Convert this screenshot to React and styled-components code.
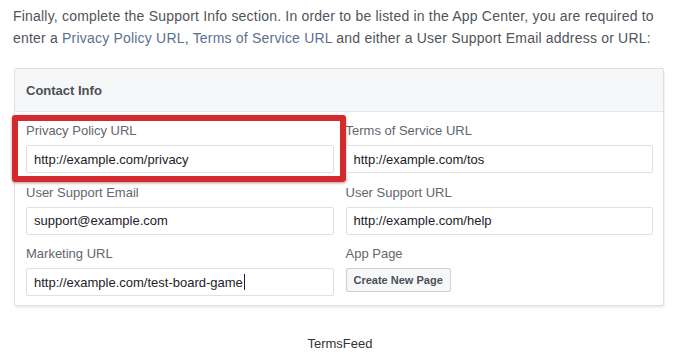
import React from "react";
import styled, { createGlobalStyle } from "styled-components";

const Global = createGlobalStyle`
  html, body { margin: 0; padding: 0; background: #ffffff; }
  body { font-family: "Liberation Sans", Arial, Helvetica, sans-serif; }
  * { box-sizing: border-box; }
`;

const Page = styled.div`
  width: 680px;
  height: 358px;
  padding: 5px 16px 0 13px;
  display: flex;
  flex-direction: column;
`;

const Intro = styled.p`
  margin: 0;
  font-size: 14px;
  line-height: 22px;
  letter-spacing: 0.2px;
  color: #50545b;
`;

const Link = styled.a`
  color: #5b6f8f;
  text-decoration: none;
`;

const Panel = styled.section`
  margin: 19px 0 0 1px;
  border: 1px solid #dddfe2;
  border-radius: 2px;
  box-shadow: 1px 2px 1px rgba(0, 0, 0, 0.06);
  background: #fff;
`;

const PanelHeader = styled.header`
  height: 43px;
  padding: 0 11px;
  display: flex;
  align-items: center;
  background: #f6f7f9;
  border-bottom: 1px solid #e5e6e9;
  font-size: 13px;
  font-weight: bold;
  color: #4b4f56;
`;

const Grid = styled.div`
  display: grid;
  grid-template-columns: 1fr 1fr;
  column-gap: 12px;
  row-gap: 10.5px;
  padding: 10px 10px 9px 11px;
`;

const Field = styled.div`
  position: relative;
  display: flex;
  flex-direction: column;
  align-items: flex-start;
`;

const Label = styled.label`
  font-size: 13px;
  line-height: 18px;
  color: #62666d;
  margin-bottom: 5px;
`;

const InputBox = styled.div`
  width: 100%;
  height: 28px;
  border: 1px solid #dddfe2;
  border-radius: 2px;
  padding: 0 7px;
  display: flex;
  align-items: center;
  font-size: 13px;
  color: #1d2129;
  background: #fff;
`;

const Caret = styled.span`
  display: inline-block;
  width: 1px;
  height: 16px;
  margin-left: 1px;
  background: #1d2129;
`;

const Button = styled.button`
  height: 24px;
  padding: 0 7px;
  border: 1px solid #ced0d4;
  border-radius: 2px;
  background: #f6f7f9;
  font-family: inherit;
  font-size: 11px;
  font-weight: bold;
  color: #4b4f56;
`;

const Highlight = styled.div`
  position: absolute;
  left: -14px;
  right: -12px;
  top: -7px;
  bottom: -9px;
  border: 6px solid #d22a2f;
  border-radius: 3px;
  box-shadow: 0 1px 3px rgba(120, 0, 0, 0.45);
  pointer-events: none;
`;

const Footer = styled.div`
  margin-top: 30px;
  text-align: center;
  font-size: 13px;
  line-height: 16px;
  color: #333;
  padding-left: 3px;
`;

const fields = [
  { label: "Privacy Policy URL", value: "http://example.com/privacy", highlight: true },
  { label: "Terms of Service URL", value: "http://example.com/tos" },
  { label: "User Support Email", value: "support@example.com" },
  { label: "User Support URL", value: "http://example.com/help" },
  { label: "Marketing URL", value: "http://example.com/test-board-game", caret: true },
  { label: "App Page", button: "Create New Page" },
];

export default function App() {
  return (
    <>
      <Global />
      <Page>
        <Intro>
          Finally, complete the Support Info section. In order to be listed in the App Center, you are required to
          enter a <Link>Privacy Policy URL</Link>, <Link>Terms of Service URL</Link> and either a User Support Email
          address or URL:
        </Intro>
        <Panel>
          <PanelHeader>Contact Info</PanelHeader>
          <Grid>
            {fields.map((f) => (
              <Field key={f.label}>
                <Label>{f.label}</Label>
                {f.button ? (
                  <Button>{f.button}</Button>
                ) : (
                  <InputBox>
                    {f.value}
                    {f.caret && <Caret />}
                  </InputBox>
                )}
                {f.highlight && <Highlight />}
              </Field>
            ))}
          </Grid>
        </Panel>
        <Footer>TermsFeed</Footer>
      </Page>
    </>
  );
}
